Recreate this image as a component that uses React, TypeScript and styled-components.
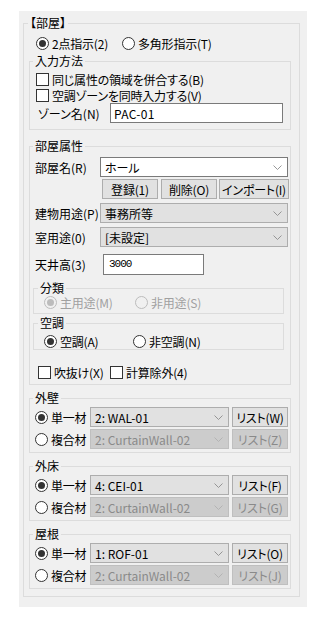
import { createGlobalStyle, styled } from 'styled-components';

const GlobalStyle = createGlobalStyle`
  html, body {
    margin: 0;
    padding: 0;
    background: #ffffff;
  }
  body {
    font-family: 'Noto Sans CJK JP', 'Noto Sans', sans-serif;
    font-size: 12px;
    font-feature-settings: 'palt' 1;
    color: #000000;
  }
`;

const Panel = styled.div`
  box-sizing: border-box;
  width: 288px;
  height: 596px;
  margin: 11px 0 0 19px;
  padding: 5px 0 0 4px;
  background: #f0f0f0;
`;

const Group = styled.fieldset<{ $width: number; $mt?: number; $ml?: number; $pb?: number }>`
  box-sizing: border-box;
  width: ${({ $width }) => $width}px;
  min-width: 0;
  margin: ${({ $mt = 0 }) => $mt}px 0 0 ${({ $ml = 0 }) => $ml}px;
  padding: 0 0 ${({ $pb = 0 }) => $pb}px 0;
  border: 1px solid #dcdcdc;
`;

const Legend = styled.legend<{ $ml?: number }>`
  margin-left: ${({ $ml = 3 }) => $ml}px;
  padding: 0 2px;
  font-size: 12px;
  line-height: 14px;
`;

const Row = styled.div<{ $h?: number; $mt?: number; $pl?: number }>`
  display: flex;
  align-items: center;
  height: ${({ $h = 16 }) => $h}px;
  margin-top: ${({ $mt = 0 }) => $mt}px;
  padding-left: ${({ $pl = 0 }) => $pl}px;
  white-space: nowrap;
  line-height: 13px;
`;

const Spacer = styled.span<{ $w: number }>`
  flex: none;
  width: ${({ $w }) => $w}px;
`;

const Label = styled.span<{ $w: number }>`
  width: ${({ $w }) => $w}px;
  flex: none;
`;

const Option = styled.label<{ $w?: number; $disabled?: boolean }>`
  display: flex;
  align-items: center;
  gap: 3px;
  flex: none;
  width: ${({ $w }) => ($w ? `${$w}px` : 'auto')};
  color: ${({ $disabled }) => ($disabled ? '#a0a0a0' : '#000000')};
  letter-spacing: -0.2px;
`;

const RadioDot = styled.span<{ $checked?: boolean; $disabled?: boolean }>`
  position: relative;
  box-sizing: border-box;
  flex: none;
  width: 13px;
  height: 13px;
  border-radius: 50%;
  border: 1px solid ${({ $disabled }) => ($disabled ? '#bcbcbc' : '#333333')};
  background: ${({ $disabled }) => ($disabled ? '#f0f0f0' : '#ffffff')};
  &::after {
    content: '';
    display: ${({ $checked }) => ($checked ? 'block' : 'none')};
    position: absolute;
    left: 2px;
    top: 2px;
    width: 7px;
    height: 7px;
    border-radius: 50%;
    background: ${({ $disabled }) => ($disabled ? '#bcbcbc' : '#333333')};
  }
`;

const CheckBox = styled.span`
  box-sizing: border-box;
  flex: none;
  width: 13px;
  height: 13px;
  border: 1px solid #333333;
  background: #ffffff;
`;

const TextBox = styled.div<{ $w: number; $h?: number; $mono?: boolean }>`
  box-sizing: border-box;
  display: flex;
  align-items: center;
  flex: none;
  width: ${({ $w }) => $w}px;
  height: ${({ $h = 20 }) => $h}px;
  padding-left: ${({ $mono }) => ($mono ? 5 : 3)}px;
  border: 1px solid #7a7a7a;
  background: #ffffff;
  font-family: ${({ $mono }) => ($mono ? "'Liberation Mono', monospace" : 'inherit')};
  font-size: ${({ $mono }) => ($mono ? '11px' : '12px')};
  letter-spacing: ${({ $mono }) => ($mono ? '-1px' : '0.3px')};
`;

type ComboKind = 'edit' | 'list' | 'disabled';

const comboBg: Record<ComboKind, string> = { edit: '#ffffff', list: '#e1e1e1', disabled: '#cccccc' };
const comboBorder: Record<ComboKind, string> = { edit: '#7a7a7a', list: '#adadad', disabled: '#bfbfbf' };

const ComboBox = styled.div<{ $w: number; $kind: ComboKind }>`
  box-sizing: border-box;
  display: flex;
  align-items: center;
  justify-content: space-between;
  flex: none;
  width: ${({ $w }) => $w}px;
  height: 20px;
  padding: 0 5px 0 4px;
  border: 1px solid ${({ $kind }) => comboBorder[$kind]};
  background: ${({ $kind }) => comboBg[$kind]};
  color: ${({ $kind }) => ($kind === 'disabled' ? '#8a8a8a' : '#000000')};
`;

const Button = styled.div<{ $w: number; $disabled?: boolean }>`
  box-sizing: border-box;
  display: flex;
  align-items: center;
  justify-content: center;
  flex: none;
  width: ${({ $w }) => $w}px;
  height: 20px;
  border: 1px solid ${({ $disabled }) => ($disabled ? '#bfbfbf' : '#adadad')};
  background: ${({ $disabled }) => ($disabled ? '#cccccc' : '#e1e1e1')};
  color: ${({ $disabled }) => ($disabled ? '#8a8a8a' : '#000000')};
  letter-spacing: -0.2px;
`;

const Chevron = ({ disabled }: { disabled?: boolean }) => (
  <svg width='9' height='5' viewBox='0 0 9 5'>
    <polyline
      points='0.5,0.5 4.5,4.5 8.5,0.5'
      fill='none'
      stroke={disabled ? '#b0b0b0' : '#8c8c8c'}
      strokeWidth='0.9'
    />
  </svg>
);

const Combo = ({ w, kind, value }: { w: number; kind: ComboKind; value: string }) => (
  <ComboBox $w={w} $kind={kind}>
    <span>{value}</span>
    <Chevron disabled={kind === 'disabled'} />
  </ComboBox>
);

const Radio = ({ label, checked, disabled, w }: { label: string; checked?: boolean; disabled?: boolean; w?: number }) => (
  <Option $w={w} $disabled={disabled}>
    <RadioDot $checked={checked} $disabled={disabled} />
    {label}
  </Option>
);

const Check = ({ label, w }: { label: string; w?: number }) => (
  <Option $w={w}>
    <CheckBox />
    {label}
  </Option>
);

const MaterialGroup = ({
  title,
  single,
  singleKey,
  compoundKey,
}: {
  title: string;
  single: string;
  singleKey: string;
  compoundKey: string;
}) => (
  <Group $width={262} $mt={6} $pb={3} $ml={5}>
    <Legend>{title}</Legend>
    <Row $h={20} $mt={2} $pl={5}>
      <Radio label='単一材' checked w={55} />
      <Combo w={139} kind='list' value={single} />
      <Spacer $w={3} />
      <Button $w={56}>{`リスト(${singleKey})`}</Button>
    </Row>
    <Row $h={20} $mt={2} $pl={5}>
      <Radio label='複合材' w={55} />
      <Combo w={139} kind='disabled' value='2: CurtainWall-02' />
      <Spacer $w={3} />
      <Button $w={56} $disabled>{`リスト(${compoundKey})`}</Button>
    </Row>
  </Group>
);

const App = () => {
  return (
    <>
      <GlobalStyle />
      <Panel>
        <Group $width={277} $pb={7}>
          <Legend $ml={4}>【部屋】</Legend>
          <Row $mt={5} $pl={12}>
            <Radio label='2点指示(2)' checked w={86} />
            <Radio label='多角形指示(T)' />
          </Row>

          <Group $width={262} $mt={3} $ml={5} $pb={6}>
            <Legend>入力方法</Legend>
            <Row $h={16} $mt={3} $pl={6}>
              <Check label='同じ属性の領域を併合する(B)' />
            </Row>
            <Row $h={16} $pl={6}>
              <Check label='空調ゾーンを同時入力する(V)' />
            </Row>
            <Row $h={20} $pl={8}>
              <Label $w={72}>ゾーン名(N)</Label>
              <TextBox $w={173}>PAC-01</TextBox>
            </Row>
          </Group>

          <Group $width={262} $mt={9} $ml={5} $pb={4}>
            <Legend>部屋属性</Legend>
            <Row $h={20} $mt={4} $pl={5}>
              <Label $w={65}>部屋名(R)</Label>
              <Combo w={188} kind='edit' value='ホール' />
            </Row>
            <Row $h={20} $mt={2} $pl={72}>
              <Button $w={56}>登録(1)</Button>
              <Spacer $w={3} />
              <Button $w={56}>削除(O)</Button>
              <Spacer $w={2} />
              <Button $w={70}>インポート(I)</Button>
            </Row>
            <Row $h={20} $mt={4} $pl={5}>
              <Label $w={65}>建物用途(P)</Label>
              <Combo w={188} kind='list' value='事務所等' />
            </Row>
            <Row $h={20} $mt={4} $pl={5}>
              <Label $w={65}>室用途(0)</Label>
              <Combo w={188} kind='list' value='[未設定]' />
            </Row>
            <Row $h={21} $mt={7} $pl={5}>
              <Label $w={68}>天井高(3)</Label>
              <TextBox $w={101} $h={21} $mono>
                3000
              </TextBox>
            </Row>

            <Group $width={251} $mt={6} $ml={3} $pb={4}>
              <Legend $ml={4}>分類</Legend>
              <Row $h={14} $pl={10}>
                <Radio label='主用途(M)' checked disabled w={91} />
                <Radio label='非用途(S)' disabled />
              </Row>
            </Group>

            <Group $width={251} $mt={2} $ml={3} $pb={1}>
              <Legend $ml={4}>空調</Legend>
              <Row $h={14} $mt={4} $pl={10}>
                <Radio label='空調(A)' checked w={89} />
                <Radio label='非空調(N)' />
              </Row>
            </Group>

            <Row $mt={14} $pl={8}>
              <Check label='吹抜け(X)' w={72} />
              <Check label='計算除外(4)' />
            </Row>
          </Group>

          <MaterialGroup title='外壁' single='2: WAL-01' singleKey='W' compoundKey='Z' />
          <MaterialGroup title='外床' single='4: CEI-01' singleKey='F' compoundKey='G' />
          <MaterialGroup title='屋根' single='1: ROF-01' singleKey='O' compoundKey='J' />
        </Group>
      </Panel>
    </>
  );
};

export default App;
